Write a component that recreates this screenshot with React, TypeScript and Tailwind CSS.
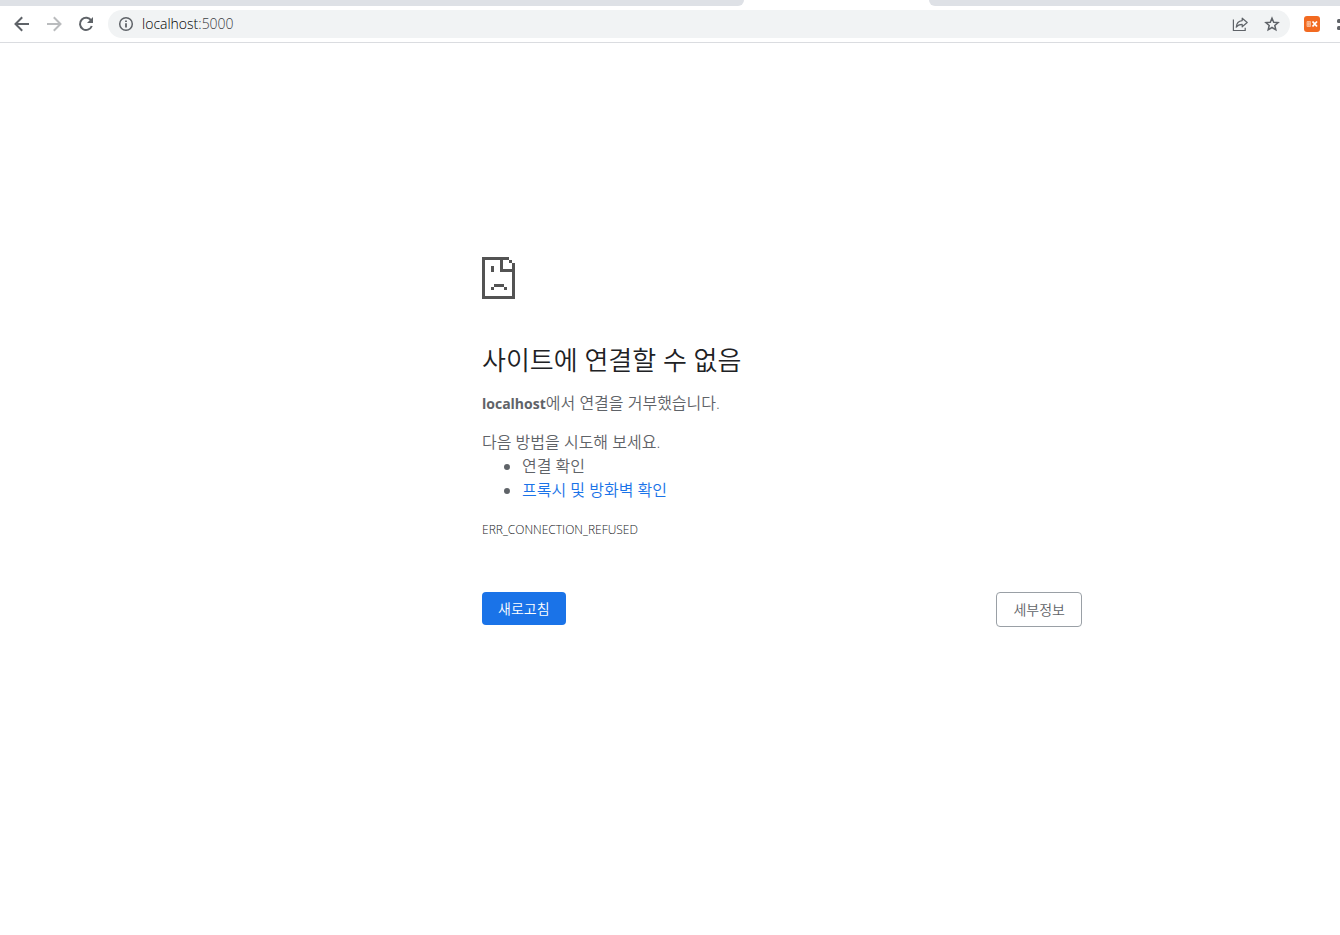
import React from "react";

const pixels: [number, number, number, number][] = [
  [0, 0, 27, 3],
  [0, 0, 3, 42],
  [0, 39, 33, 3],
  [30, 6, 3, 36],
  [27, 3, 3, 3],
  [18, 0, 3, 15],
  [18, 12, 15, 3],
  [9, 9, 3, 6],
  [12, 27, 10, 3],
  [9, 30, 3, 3],
  [22, 30, 3, 3],
];

function SadPage() {
  return (
    <svg className="block h-[42px] w-[33px]" viewBox="0 0 33 42" fill="#535353" shapeRendering="crispEdges" aria-hidden="true">
      {pixels.map(([x, y, width, height], i) => (
        <rect key={i} x={x} y={y} width={width} height={height} />
      ))}
    </svg>
  );
}

function TabStrip() {
  return (
    <div className="flex h-[6px] bg-white" aria-hidden="true">
      <div className="w-[744px] rounded-br-lg bg-[#dee1e6]" />
      <div className="w-[185px]" />
      <div className="flex-1 rounded-bl-lg bg-[#dee1e6]" />
    </div>
  );
}

function Toolbar() {
  return (
    <div className="flex h-[37px] items-center overflow-hidden border-b border-[#dadce0] pl-3">
      <div className="flex shrink-0 gap-3">
        <button type="button" aria-label="뒤로" className="size-5">
          <svg viewBox="0 0 20 20" className="size-5" fill="none" stroke="#5f6368" strokeWidth="2">
            <path d="M17 10H4M10.2 3.3 3.5 10l6.7 6.7" />
          </svg>
        </button>
        <button type="button" aria-label="앞으로" className="size-5">
          <svg viewBox="0 0 20 20" className="size-5" fill="none" stroke="#babcbe" strokeWidth="2">
            <path d="M3 10h13M9.800 3.300 16.500 10l-6.700 6.700" />
          </svg>
        </button>
        <button type="button" aria-label="새로고침" className="size-5">
          <svg viewBox="0 0 20 20" className="size-5">
            <path d="M15.300 6.700A6.100 6.100 0 1 0 15.800 12" fill="none" stroke="#5f6368" strokeWidth="2" />
            <path d="M17 3v6h-6z" fill="#5f6368" />
          </svg>
        </button>
      </div>
      <div className="ml-3 flex h-7 min-w-0 flex-1 items-center rounded-full bg-[#f1f3f4] pr-2.5 pl-2.5">
        <button type="button" aria-label="사이트 정보 보기" className="size-4 shrink-0">
          <svg viewBox="0 0 16 16" className="size-4" fill="none" stroke="#5f6368">
            <circle cx="8" cy="8" r="6.300" strokeWidth="1.500" />
            <path d="M8 7.200v4.200M8 4.500v1.600" strokeWidth="1.800" />
          </svg>
        </button>
        <a href="http://localhost:5000" className="ml-2 flex-1 text-sm font-light text-black">
          localhost<span className="text-[#3c4043]">:5000</span>
        </a>
        <button type="button" aria-label="공유" className="mr-4 size-4 shrink-0">
          <svg viewBox="0 0 16 16" className="size-4" fill="none" stroke="#5f6368" strokeWidth="1.200">
            <path d="M1.400 3.500v11h11.800v-2.700" />
            <path d="M10.200 2.200 15.200 6.500l-5 4.300V8.400c-2.800 0-4.700.8-6 2.800C4.500 7.800 6.600 5 10.200 4.600z" strokeLinejoin="round" />
          </svg>
        </button>
        <button type="button" aria-label="북마크에 추가" className="size-4 shrink-0">
          <svg viewBox="0 0 16 16" className="size-4" fill="none" stroke="#5f6368" strokeWidth="1.500">
            <path d="m8 2.200 1.700 4 4.400.4-3.300 2.900 1 4.300L8 11.500l-3.800 2.300 1-4.300-3.300-2.900 4.400-.4z" />
          </svg>
        </button>
      </div>
      <button type="button" aria-label="확장 프로그램" className="ml-3.5 size-4 shrink-0">
        <svg viewBox="0 0 16 16" className="size-4">
          <rect width="16" height="16" rx="3" fill="#f26a21" />
          <path d="M3 5.500h3.500v5H3zM3 8h3.500M4.800 5.500v5" stroke="#f9c09e" strokeWidth=".8" fill="#f59a67" />
          <path d="m8.500 5.500 4.500 5M13 5.500l-4.500 5" stroke="#fff" strokeWidth="1.800" />
        </svg>
      </button>
      <button type="button" aria-label="확장 프로그램 메뉴" className="ml-4 h-4 w-1 shrink-0 overflow-hidden">
        <svg viewBox="0 0 4 16" className="h-4 w-1" fill="#5f6368">
          <rect x="1" y="3" width="5" height="4" rx="1.500" />
          <rect x="1" y="10" width="5" height="4" rx="1.500" />
        </svg>
      </button>
    </div>
  );
}

export default function App() {
  return (
    <div className="min-h-screen bg-white font-['Open_Sans','Noto_Sans_CJK_KR',sans-serif] text-[#5f6368]">
      <header>
        <TabStrip />
        <Toolbar />
      </header>
      <main className="pt-[214px] pl-[224px]">
        <div className="mx-auto max-w-[600px] text-base leading-6 font-[350]">
          <SadPage />
          <h1 className="mt-[45px] text-[26px] leading-8 text-[#202124]">사이트에 연결할 수 없음</h1>
          <p className="mt-[15px]">
            <strong className="text-sm font-bold">localhost</strong>에서 연결을 거부했습니다.
          </p>
          <p className="mt-[15px]">다음 방법을 시도해 보세요.</p>
          <ul className="list-disc pl-10">
            <li>연결 확인</li>
            <li>
              <a href="#proxy" className="text-[#1a73e8]">프록시 및 방화벽 확인</a>
            </li>
          </ul>
          <p className="mt-4 text-xs leading-6 font-light text-[#202124]">ERR_CONNECTION_REFUSED</p>
          <div className="mt-[50px] flex items-start justify-between text-sm leading-[33px]">
            <button type="button" className="rounded bg-[#1a73e8] px-4 text-white">새로고침</button>
            <button type="button" className="rounded border border-[#9aa0a6] px-4">세부정보</button>
          </div>
        </div>
      </main>
    </div>
  );
}
